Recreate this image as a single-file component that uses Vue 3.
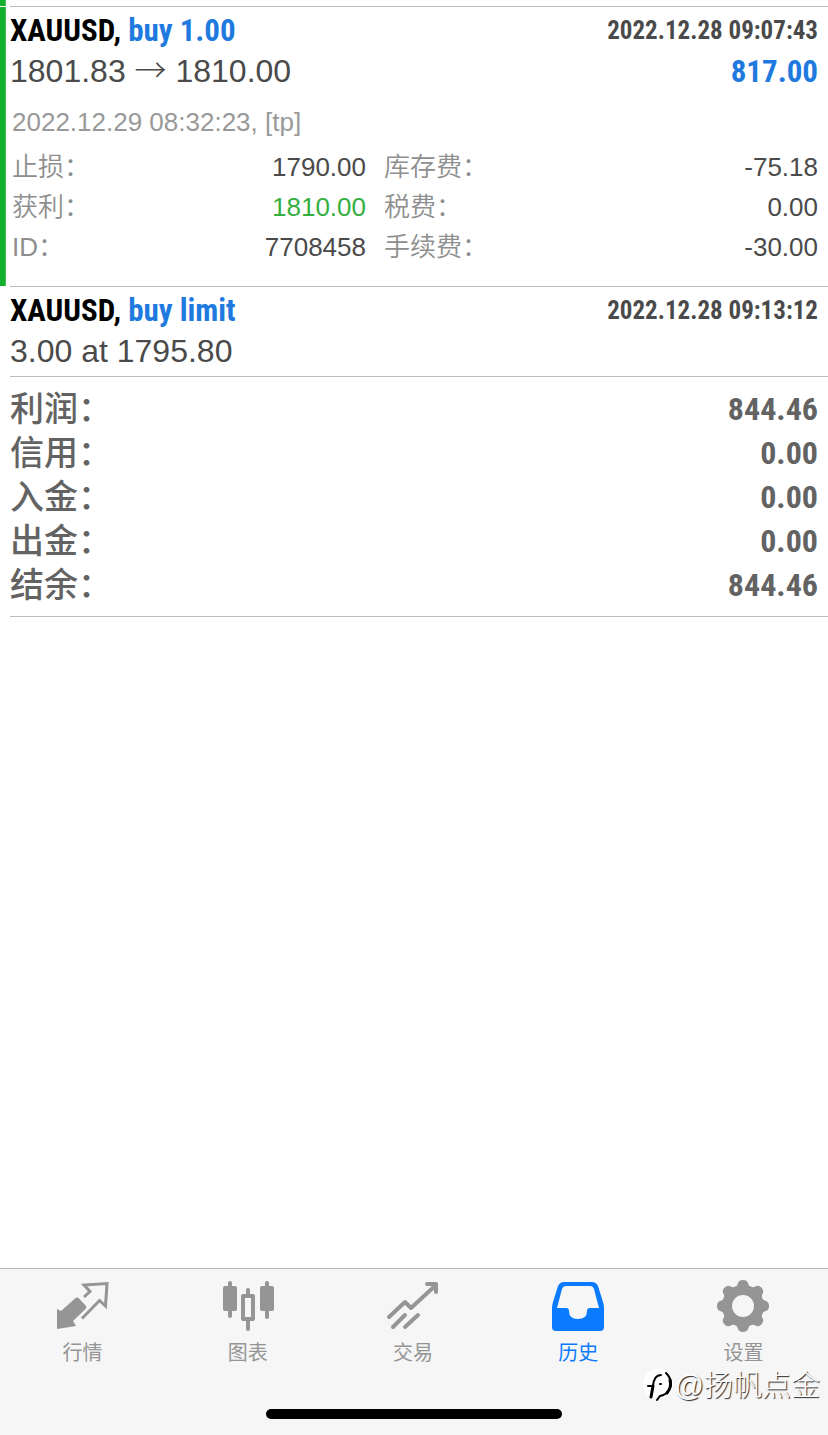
<script setup>
const trade = {
  symbol: 'XAUUSD',
  side: 'buy 1.00',
  opened: '2022.12.28 09:07:43',
  open: '1801.83',
  close: '1810.00',
  profit: '817.00',
  closed: '2022.12.29 08:32:23, [tp]',
}

const details = [
  [
    { label: '止损：', value: '1790.00' },
    { label: '获利：', value: '1810.00', hit: true },
    { label: 'ID：', value: '7708458' },
  ],
  [
    { label: '库存费：', value: '-75.18' },
    { label: '税费：', value: '0.00' },
    { label: '手续费：', value: '-30.00' },
  ],
]

const totals = [
  { label: '利润：', value: '844.46' },
  { label: '信用：', value: '0.00' },
  { label: '入金：', value: '0.00' },
  { label: '出金：', value: '0.00' },
  { label: '结余：', value: '844.46' },
]

const tabs = [
  { id: 'quotes', label: '行情' },
  { id: 'charts', label: '图表' },
  { id: 'trade', label: '交易' },
  { id: 'history', label: '历史' },
  { id: 'settings', label: '设置' },
]
const active = 'history'
</script>

<template>
  <div class="app">
    <main class="list">
      <div class="previous take"></div>

      <article class="deal take">
        <div class="body">
          <header class="line">
            <h2 class="title">{{ trade.symbol }}, <span class="side">{{ trade.side }}</span></h2>
            <time class="stamp">{{ trade.opened }}</time>
          </header>
          <div class="line amounts">
            <span class="price">{{ trade.open }} <span class="arrow">→</span> {{ trade.close }}</span>
            <span class="profit">{{ trade.profit }}</span>
          </div>
          <p class="closed">{{ trade.closed }}</p>
          <div class="details">
            <dl v-for="(column, i) in details" :key="i" class="column">
              <div v-for="item in column" :key="item.label" class="detail">
                <dt>{{ item.label }}</dt>
                <dd :class="{ hit: item.hit }">{{ item.value }}</dd>
              </div>
            </dl>
          </div>
        </div>
      </article>

      <article class="deal">
        <div class="body">
          <header class="line">
            <h2 class="title">XAUUSD, <span class="side">buy limit</span></h2>
            <time class="stamp">2022.12.28 09:13:12</time>
          </header>
          <div class="line amounts">
            <span class="price">3.00 at 1795.80</span>
          </div>
        </div>
      </article>

      <dl class="totals">
        <div v-for="item in totals" :key="item.label" class="total">
          <dt>{{ item.label }}</dt>
          <dd>{{ item.value }}</dd>
        </div>
      </dl>
    </main>

    <footer class="bar">
      <nav class="tabs">
        <button v-for="tab in tabs" :key="tab.id" type="button" class="tab" :class="{ active: tab.id === active }">
          <svg v-if="tab.id === 'quotes'" class="icon" viewBox="0 0 52 52" aria-hidden="true">
            <path fill="currentColor" d="M18 18.500Q20 16.500 22 18.500L29 26Q30 27.500 28.500 29L16 41L19 46L0 49V29L4 31Z" />
            <path fill="none" stroke="currentColor" stroke-width="3" d="M27 17L33 11.500L27 5L50 3.500L48.500 26L42.500 20.500L25 38.500" />
          </svg>
          <svg v-else-if="tab.id === 'charts'" class="icon" viewBox="0 0 52 52" aria-hidden="true">
            <g fill="currentColor">
              <rect x="1" y="6" width="14" height="25" rx="2" />
              <rect x="6" y="1" width="4" height="37" rx="2" />
              <rect x="38" y="6" width="14" height="25" rx="2" />
              <rect x="43" y="1" width="4" height="38" rx="2" />
              <rect x="24" y="8" width="4" height="9" rx="2" />
              <rect x="24" y="39" width="4" height="12" rx="2" />
            </g>
            <rect x="21" y="16" width="10" height="23" fill="none" stroke="currentColor" stroke-width="4" stroke-linejoin="round" />
          </svg>
          <svg v-else-if="tab.id === 'trade'" class="icon" viewBox="0 0 52 52" aria-hidden="true">
            <g fill="none" stroke="currentColor" stroke-width="4" stroke-linecap="round" stroke-linejoin="round">
              <path d="M2 37L18 22L24 28L49 5" />
              <path d="M40 4H49V12" />
              <path d="M6 47L18 35" />
              <path d="M18 47L31 35" />
            </g>
          </svg>
          <svg v-else-if="tab.id === 'history'" class="icon" viewBox="0 0 52 52" aria-hidden="true">
            <path fill="currentColor" fill-rule="evenodd" d="M12 2H40Q44 2 46 6L51 22Q52 25 52 28V47Q52 51 48 51H4Q0 51 0 47V28Q0 25 1 22L6 6Q8 2 12 2ZM14 6Q11 6 10 9L5 28H14Q17 28 17 31Q17 39 26 39Q35 39 35 31Q35 28 38 28H47L42 9Q41 6 38 6Z" />
          </svg>
          <svg v-else class="icon" viewBox="0 0 52 52" aria-hidden="true">
            <circle cx="26" cy="26" r="16" fill="none" stroke="currentColor" stroke-width="10" />
            <g fill="currentColor">
              <path v-for="n in 8" :key="n" :transform="`rotate(${n * 45} 26 26)`" d="M16 9Q20 7 21 3Q22 0 26 0Q30 0 31 3Q32 7 36 9Z" />
            </g>
          </svg>
          <span>{{ tab.label }}</span>
        </button>
      </nav>
      <div class="home"></div>
      <div class="watermark">
        <svg class="mark" viewBox="0 0 32 34" aria-hidden="true">
          <circle cx="15" cy="15" r="15" fill="#fff" />
          <g fill="none" stroke="#000" stroke-linecap="round">
            <path stroke-width="3" d="M8 28L10 17" />
            <path stroke-width="2" d="M10 17Q11 6 18 6M5 17H9M17 15H18" />
            <path stroke-width="2" d="M23 4Q31 12 26 21Q23 26 17 27L14 31" />
            <path stroke-width="3" d="M27 11Q29 18 24 24" />
          </g>
        </svg>
        <span>@扬帆点金</span>
      </div>
    </footer>
  </div>
</template>

<style>
body {
  margin: 0;
  background: #fff;
}
</style>

<style scoped>
.app {
  display: flex;
  flex-direction: column;
  min-height: 100vh;
  color: #4a4a4a;
  font-family: "Liberation Sans", "Noto Sans CJK SC", sans-serif;
}
.list {
  flex: 1;
}
h2,
p,
dl,
dd {
  margin: 0;
}
.previous {
  height: 6px;
}
.deal,
.previous {
  padding-left: 10px;
}
.take {
  background: linear-gradient(90deg, #12b02c 5px, #4cb85a 5px, #4cb85a 6px, transparent 6px) no-repeat;
}
.deal.take {
  background-position: 0 1px;
}
.body {
  border-top: 1px solid #bcbcbc;
  padding: 4px 10px 5px 0;
}
.take .body {
  padding-bottom: 19px;
}
.line {
  display: flex;
  justify-content: space-between;
  height: 40px;
  line-height: 40px;
}
.amounts {
  align-items: baseline;
}
.title,
.stamp,
.profit,
.total dd {
  font-family: "Roboto Condensed", "Liberation Sans", sans-serif;
  font-weight: 700;
}
.title {
  color: #000;
  font-size: 31px;
}
.side,
.profit {
  color: #1f7ae0;
}
.stamp {
  font-size: 25px;
}
.price {
  font-size: 32px;
}
.arrow {
  font-family: "Noto Sans CJK SC", sans-serif;
  font-weight: 300;
  line-height: 1;
}
.profit {
  font-size: 31px;
}
.closed {
  padding: 11px 2px 0;
  color: #999;
  font-size: 26px;
  line-height: 40px;
}
.details {
  display: grid;
  grid-template-columns: 354fr 434fr;
  gap: 18px;
  padding: 5px 0 0 2px;
}
.detail,
.total {
  display: flex;
  justify-content: space-between;
}
.detail {
  height: 40px;
  font-size: 26px;
  line-height: 40px;
}
.detail dt {
  color: #8e8e8e;
  font-weight: 350;
}
.detail .hit {
  color: #35b03f;
}
.totals {
  margin-left: 10px;
  padding: 10px 10px 9px 0;
  border-top: 1px solid #bcbcbc;
  border-bottom: 1px solid #bcbcbc;
  color: #636363;
}
.total {
  height: 44px;
  font-size: 34px;
  line-height: 44px;
}
.total dt {
  font-weight: 500;
}
.total dd {
  font-size: 32px;
}
.bar {
  position: relative;
  border-top: 1px solid #b4b4b4;
  background: #f6f6f6;
  padding: 11px 0 16px;
}
.tabs {
  display: grid;
  grid-template-columns: repeat(5, 1fr);
  padding-right: 2px;
}
.tab {
  display: flex;
  flex-direction: column;
  align-items: center;
  gap: 6px;
  padding: 0;
  border: 0;
  background: none;
  color: #959595;
  font: 400 20px/30px "Liberation Sans", "Noto Sans CJK SC", sans-serif;
}
.tab.active {
  color: #0a7aff;
}
.icon {
  width: 52px;
  height: 52px;
}
.home {
  width: 296px;
  height: 10px;
  margin: 41px auto 0;
  border-radius: 5px;
  background: #000;
}
.watermark {
  position: absolute;
  right: 8px;
  bottom: 29px;
  display: flex;
  align-items: center;
  color: #fff;
  font-size: 29px;
  line-height: 40px;
  font-weight: 300;
  text-shadow: 1px 1px 1px #222;
}
.mark {
  width: 32px;
  height: 34px;
}
</style>
